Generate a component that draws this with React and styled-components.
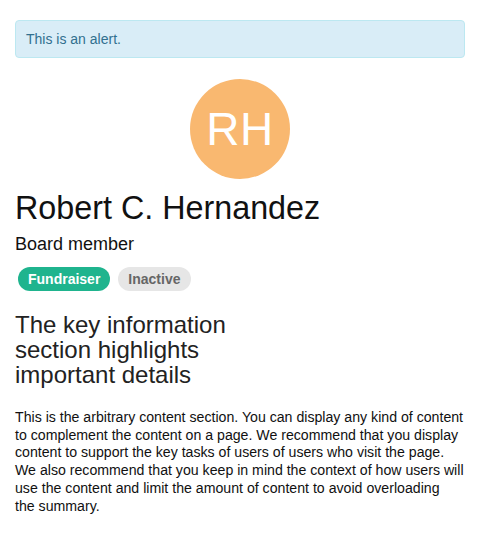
import React from "react";
import styled, { createGlobalStyle } from "styled-components";

const Global = createGlobalStyle`
  html, body { margin: 0; padding: 0; background: #fff; }
  body { font-family: "Liberation Sans", Arial, Helvetica, sans-serif; color: #222; }
  * { box-sizing: border-box; }
`;

const Page = styled.div`
  padding: 20px 15px;
  display: flex;
  flex-direction: column;
`;

const Alert = styled.div`
  background: #d9edf7;
  border: 1px solid #bce8f1;
  border-radius: 4px;
  color: #31708f;
  font-size: 14px;
  line-height: 16px;
  padding: 10px;
`;

const AvatarRow = styled.div`
  display: flex;
  justify-content: center;
  margin-top: 21px;
`;

const Avatar = styled.div`
  width: 100px;
  height: 100px;
  border-radius: 50%;
  background: #f9b870;
  color: #fff;
  display: flex;
  align-items: center;
  justify-content: center;
  font-size: 46px;
  letter-spacing: 0.5px;
`;

const Name = styled.h1`
  margin: 11px 0 0;
  font-size: 32.3px;
  font-weight: 400;
  line-height: 36px;
  color: #111;
`;

const Role = styled.div`
  margin-top: 8px;
  font-size: 18px;
  line-height: 21px;
  color: #111;
`;

const Badges = styled.div`
  display: flex;
  gap: 8px;
  margin-top: 12px;
  padding-left: 3px;
`;

const Badge = styled.span`
  display: inline-flex;
  align-items: center;
  height: 24px;
  padding: 0 10px;
  border-radius: 12px;
  font-size: 14px;
  font-weight: 700;
  background: ${(p) => (p.$tone === "green" ? "#1fb48e" : "#e6e6e6")};
  color: ${(p) => (p.$tone === "green" ? "#fff" : "#666")};
`;

const KeyInfo = styled.h2`
  margin: 21px 0 0;
  max-width: 50%;
  font-size: 24px;
  font-weight: 400;
  line-height: 25px;
  color: #222;
`;

const Body = styled.p`
  margin: 22px 0 0;
  font-size: 14.15px;
  line-height: 17.7px;
  color: #111;
`;

const Keep = styled.span`
  white-space: nowrap;
`;

export default function App() {
  return (
    <>
      <Global />
      <Page>
        <Alert>This is an alert.</Alert>
        <AvatarRow>
          <Avatar>RH</Avatar>
        </AvatarRow>
        <Name>Robert C. Hernandez</Name>
        <Role>Board member</Role>
        <Badges>
          <Badge $tone="green">Fundraiser</Badge>
          <Badge>Inactive</Badge>
        </Badges>
        <KeyInfo>The key information section highlights important details</KeyInfo>
        <Body>
          This is the arbitrary content section. You can display any kind of content to
          complement the content on a page. We recommend that you display content to
          support the key tasks of users of users who visit the page. We also recommend
          that you keep in mind the context of how users will use the content and limit
          the amount of content to avoid overloading <Keep>the summary.</Keep>
        </Body>
      </Page>
    </>
  );
}
